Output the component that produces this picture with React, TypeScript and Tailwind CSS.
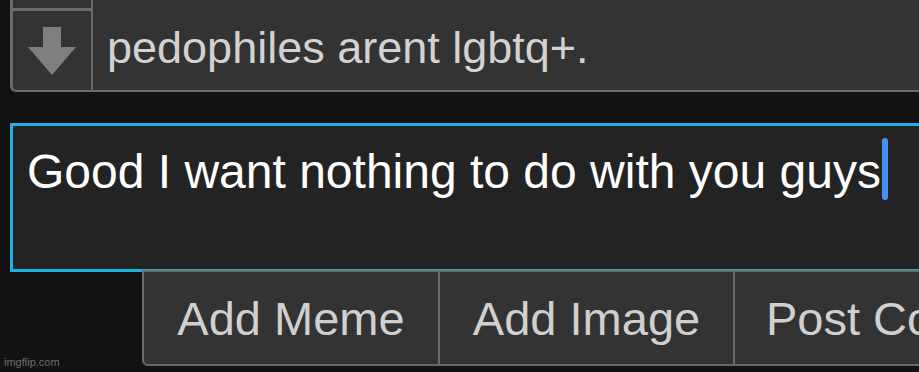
import React from "react";

export default function App() {
  return (
    <div className="relative h-[372px] w-[919px] overflow-hidden bg-[#121212] font-['Liberation_Sans',Arial,sans-serif]">
      {/* previous comment row */}
      <div className="ml-[10px] flex h-[92px] w-[940px] rounded-bl-[6px] border-b-[2px] border-l-[3px] border-[#6b6b6b] bg-[#333333]">
        <div className="flex w-[80px] shrink-0 flex-col border-r-[2px] border-[#6b6b6b]">
          <div className="h-[11px] border-b-[3px] border-[#6b6b6b]" />
          <div className="flex flex-1 items-center justify-center">
            <svg width="48" height="48" viewBox="0 0 48 48">
              <polygon points="15,0 33,0 33,20 48,20 24,48 0,20 15,20" fill="#7f7f7f" />
            </svg>
          </div>
        </div>
        <div className="flex flex-1 items-center pl-[14px] pt-[5px] text-[45px] leading-none whitespace-nowrap text-[#d2d2d2]">
          pedophiles arent lgbtq+.
        </div>
      </div>

      {/* text area */}
      <div className="ml-[10px] mt-[31px] flex h-[149px] w-[940px] items-start border-[3px] border-[#1eb2e0] bg-[#232323] pl-[14px] pt-[12px]">
        <span className="mt-[10px] whitespace-nowrap text-[48px] leading-none text-white">
          Good I want nothing to do with you guys
        </span>
        <span className="ml-[1px] inline-block h-[62px] w-[6px] shrink-0 rounded-full bg-[#4a8ef5]" />
      </div>

      {/* buttons */}
      <div className="ml-[142px] mt-[-2px] flex h-[96px] w-[900px] rounded-bl-[6px] border-[2px] border-[#6b6b6b] bg-[#333333] text-[47px] leading-none text-[#d0d0d0]">
        <div className="flex w-[296px] shrink-0 items-center justify-center border-r-[2px] border-[#6b6b6b] whitespace-nowrap">
          Add Meme
        </div>
        <div className="flex w-[295px] shrink-0 items-center justify-center border-r-[2px] border-[#6b6b6b] whitespace-nowrap">
          Add Image
        </div>
        <div className="flex shrink-0 items-center pl-[31px] whitespace-nowrap">
          Post Comment
        </div>
      </div>

      <div className="absolute left-[4px] top-[357px] text-[11px] leading-none text-[#6f6f6f]">
        imgflip.com
      </div>
    </div>
  );
}
